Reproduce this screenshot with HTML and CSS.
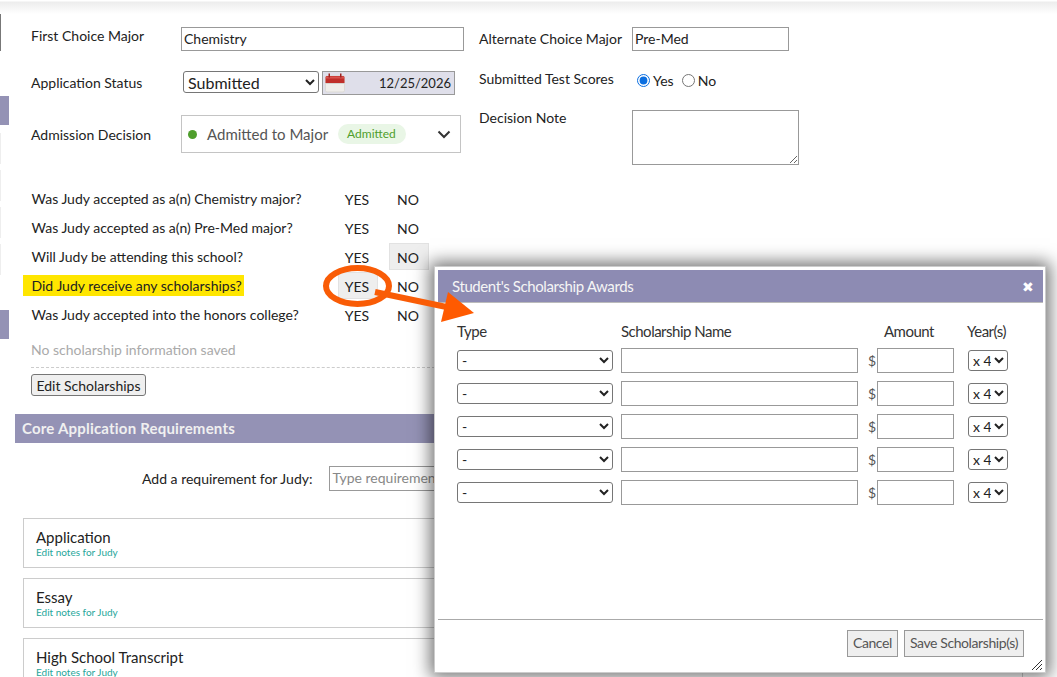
FILE: index.html
```html
<!DOCTYPE html>
<html lang="en">
<head>
  <meta charset="UTF-8" />
  <title>Application Detail</title>
  <link rel="stylesheet" href="styles.css">
</head>
<body>
  <div class="page">
    <div class="top-shade"></div>

    <div class="side-rail">
      <div class="rail-item rail-line"></div>
      <div class="rail-item rail-tab rail-first"></div>
      <div class="rail-item rail-pale"></div>
      <div class="rail-item rail-pale"></div>
      <div class="rail-item rail-pale"></div>
      <div class="rail-item rail-pale"></div>
      <div class="rail-item rail-tab rail-second"></div>
    </div>

    <div class="content">
      <div class="form-columns">
        <div class="form-left">
          <div class="form-row row-first">
            <label class="field-label">First Choice Major</label>
            <input class="text-input major-input" type="text" value="Chemistry">
          </div>
          <div class="form-row row-status">
            <label class="field-label">Application Status</label>
            <select class="status-select"><option>Submitted</option></select>
            <div class="date-field">
              <svg class="cal-icon" width="20" height="20" viewBox="0 0 20 20">
                <rect x="0.500" y="3" width="19" height="16" rx="1.500" fill="#efedea" stroke="#dbd9d5"/>
                <path d="M0.500 10V4.500C0.500 3.500 1.200 3 2 3H18C18.800 3 19.500 3.500 19.500 4.500V10Z" fill="#c02f2a"/>
                <rect x="1" y="3.500" width="18" height="2" fill="#d9534e"/>
                <rect x="0.500" y="10" width="19" height="1" fill="#d6d3ce"/>
                <rect x="3.500" y="0.500" width="1.500" height="4" fill="#9c2420"/>
                <rect x="15" y="0.500" width="1.500" height="4" fill="#9c2420"/>
              </svg>
              <span>12/25/2026</span>
            </div>
          </div>
          <div class="form-row row-decision">
            <label class="field-label">Admission Decision</label>
            <div class="decision-box">
              <span class="green-dot"></span>
              <span class="decision-text">Admitted to Major</span>
              <span class="decision-pill">Admitted</span>
              <svg class="chevron" width="14" height="9" viewBox="0 0 14 9">
                <path d="M1.500 1.500L7 7L12.500 1.500" fill="none" stroke="#333" stroke-width="2"/>
              </svg>
            </div>
          </div>
        </div>

        <div class="form-right">
          <div class="form-row row-first">
            <label class="field-label right-label">Alternate Choice Major</label>
            <input class="text-input alt-input" type="text" value="Pre-Med">
          </div>
          <div class="form-row row-scores">
            <label class="field-label right-label">Submitted Test Scores</label>
            <label class="radio-label"><input type="radio" name="scores" checked>Yes</label>
            <label class="radio-label"><input type="radio" name="scores">No</label>
          </div>
          <div class="form-row row-note">
            <label class="field-label right-label">Decision Note</label>
            <textarea class="note-input"></textarea>
          </div>
        </div>
      </div>

      <div class="questions">
        <div class="question">
          <div class="question-text"><span>Was Judy accepted as a(n) Chemistry major?</span></div>
          <div class="answer">YES</div>
          <div class="answer">NO</div>
        </div>
        <div class="question">
          <div class="question-text"><span>Was Judy accepted as a(n) Pre-Med major?</span></div>
          <div class="answer">YES</div>
          <div class="answer">NO</div>
        </div>
        <div class="question">
          <div class="question-text"><span>Will Judy be attending this school?</span></div>
          <div class="answer">YES</div>
          <div class="answer selected">NO</div>
        </div>
        <div class="question">
          <div class="question-text"><span class="marked">Did Judy receive any scholarships?</span></div>
          <div class="answer selected">YES</div>
          <div class="answer">NO</div>
        </div>
        <div class="question">
          <div class="question-text"><span>Was Judy accepted into the honors college?</span></div>
          <div class="answer">YES</div>
          <div class="answer">NO</div>
        </div>
      </div>

      <div class="no-scholarship">No scholarship information saved</div>
      <button class="plain-button edit-button">Edit Scholarships</button>

      <div class="section-bar">Core Application Requirements</div>

      <div class="add-req">
        <label>Add a requirement for Judy:</label>
        <input class="text-input req-input" type="text" placeholder="Type requirement">
      </div>

      <div class="req-card">
        <div class="req-name">Application</div>
        <a class="req-link">Edit notes for Judy</a>
      </div>
      <div class="req-card">
        <div class="req-name">Essay</div>
        <a class="req-link">Edit notes for Judy</a>
      </div>
      <div class="req-card">
        <div class="req-name">High School Transcript</div>
        <a class="req-link">Edit notes for Judy</a>
      </div>
    </div>

    <!-- scholarship dialog, sits over the page -->
    <div class="modal">
      <div class="modal-head">
        <span>Student's Scholarship Awards</span>
        <span class="modal-close">&#10006;</span>
      </div>
      <div class="modal-body">
        <div class="award-grid">
          <div class="award-head">Type</div>
          <div class="award-head">Scholarship Name</div>
          <div class="award-head amount-head">Amount</div>
          <div class="award-head years-head">Year(s)</div>

          <select class="type-select"><option>-</option></select>
          <input class="text-input name-input" type="text">
          <div class="amount-cell"><span>$</span><input class="text-input amount-input" type="text"></div>
          <select class="years-select"><option>x 4</option></select>

          <select class="type-select"><option>-</option></select>
          <input class="text-input name-input" type="text">
          <div class="amount-cell"><span>$</span><input class="text-input amount-input" type="text"></div>
          <select class="years-select"><option>x 4</option></select>

          <select class="type-select"><option>-</option></select>
          <input class="text-input name-input" type="text">
          <div class="amount-cell"><span>$</span><input class="text-input amount-input" type="text"></div>
          <select class="years-select"><option>x 4</option></select>

          <select class="type-select"><option>-</option></select>
          <input class="text-input name-input" type="text">
          <div class="amount-cell"><span>$</span><input class="text-input amount-input" type="text"></div>
          <select class="years-select"><option>x 4</option></select>

          <select class="type-select"><option>-</option></select>
          <input class="text-input name-input" type="text">
          <div class="amount-cell"><span>$</span><input class="text-input amount-input" type="text"></div>
          <select class="years-select"><option>x 4</option></select>
        </div>
      </div>
      <div class="modal-foot">
        <button class="foot-button">Cancel</button>
        <button class="foot-button">Save Scholarship(s)</button>
      </div>
      <svg class="resize-grip" width="12" height="12" viewBox="0 0 12 12">
        <path d="M1 11L11 1M5 11L11 5M9 11L11 9" stroke="#333" stroke-width="1" fill="none"/>
      </svg>
    </div>

    <!-- orange callout drawn on the screenshot -->
    <svg class="callout" width="1057" height="677" viewBox="0 0 1057 677">
      <ellipse cx="357.500" cy="286" rx="31.500" ry="18" fill="none" stroke="#f95c06" stroke-width="6"/>
      <path d="M375 292L456 309" fill="none" stroke="#f95c06" stroke-width="6"/>
      <polygon points="448,292 474,313 441,322" fill="#ff5a00"/>
    </svg>
  </div>
</body>
</html>
```

FILE: styles.css
```css
* { box-sizing: border-box; }
html, body { margin: 0; padding: 0; }
body {
  font-family: Lato, 'Noto Sans', sans-serif;
  font-size: 14px;
  color: #222;
  background-color: #fff;
}
.page {
  position: relative;
  width: 1057px;
  height: 677px;
  overflow: hidden;
  display: flex;
}
.top-shade {
  position: absolute;
  top: 0; left: 0; right: 0;
  height: 14px;
  background: linear-gradient(to bottom, #fff 0, #fff 1px, #ededed 2px, #fff 14px);
}

/* left rail */
.side-rail { width: 15px; flex-shrink: 0; display: flex; flex-direction: column; }
.rail-item { width: 9px; flex-shrink: 0; }
.rail-line { width: 1px; height: 38px; margin-top: 13px; background-color: #777; }
.rail-tab { background-color: #9492b5; height: 29px; }
.rail-first { margin-top: 45px; margin-bottom: 2px; }
.rail-pale { width: 1px; height: 31px; margin-top: 6px; background-color: #eee; }
.rail-second { margin-top: 35px; }

/* top form */
.content { width: 1030px; flex-shrink: 0; }
.form-columns { display: flex; padding-top: 27px; padding-left: 16px; }
.form-left { width: 448px; }
.form-right { flex: 1; }
.form-row { display: flex; align-items: flex-start; }
.field-label { width: 150px; flex-shrink: 0; line-height: 18px; }
.right-label { width: 153px; }

.text-input {
  border: 1px solid #999;
  background-color: #fff;
  font-family: inherit;
  font-size: 14px;
  color: #222;
  padding: 0 2px 2px;
  border-radius: 0;
  outline: none;
}
.row-first .right-label { margin-top: 3px; }
.major-input { width: 283px; height: 24px; }
.alt-input { width: 157px; height: 24px; }

.row-status { margin-top: 20px; }
.row-status .field-label { margin-top: 3px; }
.status-select {
  margin-left: 2px;
  width: 136px;
  height: 22px;
  font-family: inherit;
  font-size: 16px;
  padding-top: 0;
  padding-bottom: 3px;
  background-color: #fff;
  border: 1px solid #767676;
  border-radius: 3px;
  color: #222;
}
.date-field {
  margin-left: 3px;
  width: 133px;
  height: 24px;
  background-color: #dfdfea;
  border: 1px solid #999;
  display: flex;
  align-items: center;
  justify-content: space-between;
  padding: 0 3px 0 2px;
  font-size: 13px;
}
.cal-icon { flex-shrink: 0; }

.row-decision { margin-top: 20px; }
.row-decision .field-label { margin-top: 11px; }
.decision-box {
  width: 280px;
  height: 38px;
  border: 1px solid #c4c4c4;
  display: flex;
  align-items: center;
  padding: 0 9px 0 6px;
}
.green-dot {
  width: 9px; height: 9px;
  border-radius: 50%;
  background-color: #4f9e2c;
  margin-right: 10px;
}
.decision-text { font-size: 15px; color: #555; }
.decision-pill {
  margin-left: 10px;
  background-color: #e9f6e6;
  color: #4f9e2c;
  font-size: 12px;
  line-height: 20px;
  padding: 0 10px 0 9px;
  border-radius: 10px;
}
.chevron { margin-left: auto; }

.row-scores { margin-top: 17px; align-items: center; height: 24px; }
.row-scores .right-label { margin-top: -2px; }
.radio-label { display: flex; align-items: center; margin-right: 3px; padding-top: 1px; }
.radio-label input { margin: -1px 3px 0 5px; width: 13px; height: 13px; accent-color: #0b6ee0; }
.row-note { margin-top: 18px; }
.row-note .right-label { margin-top: -1px; }
.note-input { width: 167px; height: 55px; border: 1px solid #999; outline: none; }

/* yes / no questions */
.questions { margin-top: 19px; padding-left: 16px; }
.question { display: flex; align-items: center; height: 29px; }
.question-text { width: 307px; flex-shrink: 0; padding-left: 0.500px; }
.marked { background-color: #ffe600; padding: 2px 2px 2px 9px; margin-left: -9px; }
.answer {
  width: 40px;
  height: 27px;
  line-height: 27px;
  text-align: center;
  border: 1px solid transparent;
  padding-right: 2px;
  margin-right: 11px;
}
.answer.selected { background-color: #eee; border-color: #e2e2e2; }

.no-scholarship {
  margin: 12px 0 0 16px;
  width: 404px;
  height: 27px;
  color: #aaa;
  border-bottom: 1px dashed #ccc;
  line-height: 17px;
}
.plain-button {
  font-family: inherit;
  font-size: 14px;
  color: #222;
  background-color: #efefef;
  border: 1px solid #767676;
  border-radius: 3px;
}
.edit-button { display: block; margin: 6px 0 0 16px; width: 115px; height: 22px; padding: 0; }

/* requirements */
.section-bar {
  margin-top: 18px;
  height: 29px;
  line-height: 29px;
  padding-left: 7px;
  background-color: #9492b5;
  color: #f0f0f0;
  font-weight: 700;
  font-size: 15px;
  letter-spacing: 0.2px;
}
.add-req { display: flex; align-items: center; margin: 23px 0 0 127px; }
.add-req label { margin-right: 17px; }
.req-input { width: 300px; height: 25px; }
.req-input::placeholder { color: #888; }

.req-card {
  margin: 0 0 10px 8px;
  width: 1000px;
  height: 50px;
  border: 1px solid #ccc;
  padding: 9px 12px;
}
.add-req + .req-card { margin-top: 27px; }
.req-name { font-size: 15px; line-height: 18px; color: #222; }
.req-link { display: block; font-size: 10px; line-height: 12px; color: #26a69a; }

/* dialog */
.modal {
  position: absolute;
  left: 434px;
  top: 266px;
  width: 612px;
  height: 407px;
  background-color: #fff;
  border: 1px solid #ccc;
  padding: 3px;
  box-shadow: 0 0 16px 4px rgba(0, 0, 0, 0.55);
  display: flex;
  flex-direction: column;
}
.modal-head {
  height: 33px;
  margin-right: -1px;
  background-color: #8d8bb3;
  border-bottom: 1px solid #bbb;
  color: #f5f5f5;
  font-size: 15px;
  letter-spacing: -0.400px;
  display: flex;
  align-items: center;
  justify-content: space-between;
  padding: 0 9px 0 14px;
}
.modal-close { font-size: 14px; color: #fff; letter-spacing: 0; }
.modal-body { flex: 1; padding: 20px 0 0 19px; }
.award-grid {
  display: grid;
  grid-template-columns: 156px 237px 88px 46px;
  column-gap: 8px;
  row-gap: 8px;
  align-items: center;
}
.award-head { color: #333; font-size: 15px; letter-spacing: -0.500px; line-height: 17px; }
.amount-head { padding-left: 18px; }
.years-head { white-space: nowrap; margin-left: 5px; }
.type-select, .years-select {
  height: 21px;
  font-family: inherit;
  font-size: 14px;
  background-color: #fff;
  border: 1px solid #767676;
  border-radius: 3px;
  color: #222;
}
.type-select { width: 156px; }
.years-select { width: 40px; padding: 0; margin-left: 6px; }
.name-input { width: 237px; height: 25px; }
.amount-cell { display: flex; align-items: center; justify-content: space-between; padding-left: 2px; color: #555; }
.amount-input { width: 77px; height: 25px; }

.modal-foot {
  border-top: 1px solid #aaa;
  height: 50px;
  margin-right: -1px;
  display: flex;
  justify-content: flex-end;
  padding: 10px 19px 0 0;
  gap: 6px;
}
.foot-button {
  height: 27px;
  font-family: inherit;
  font-size: 14px;
  letter-spacing: -0.400px;
  color: #555;
  background-color: #efefef;
  border: 1px solid #999;
  padding: 0 5px 2px;
}
.resize-grip { position: absolute; right: 2px; bottom: 1px; }

.callout { position: absolute; left: 0; top: 0; pointer-events: none; }
```
